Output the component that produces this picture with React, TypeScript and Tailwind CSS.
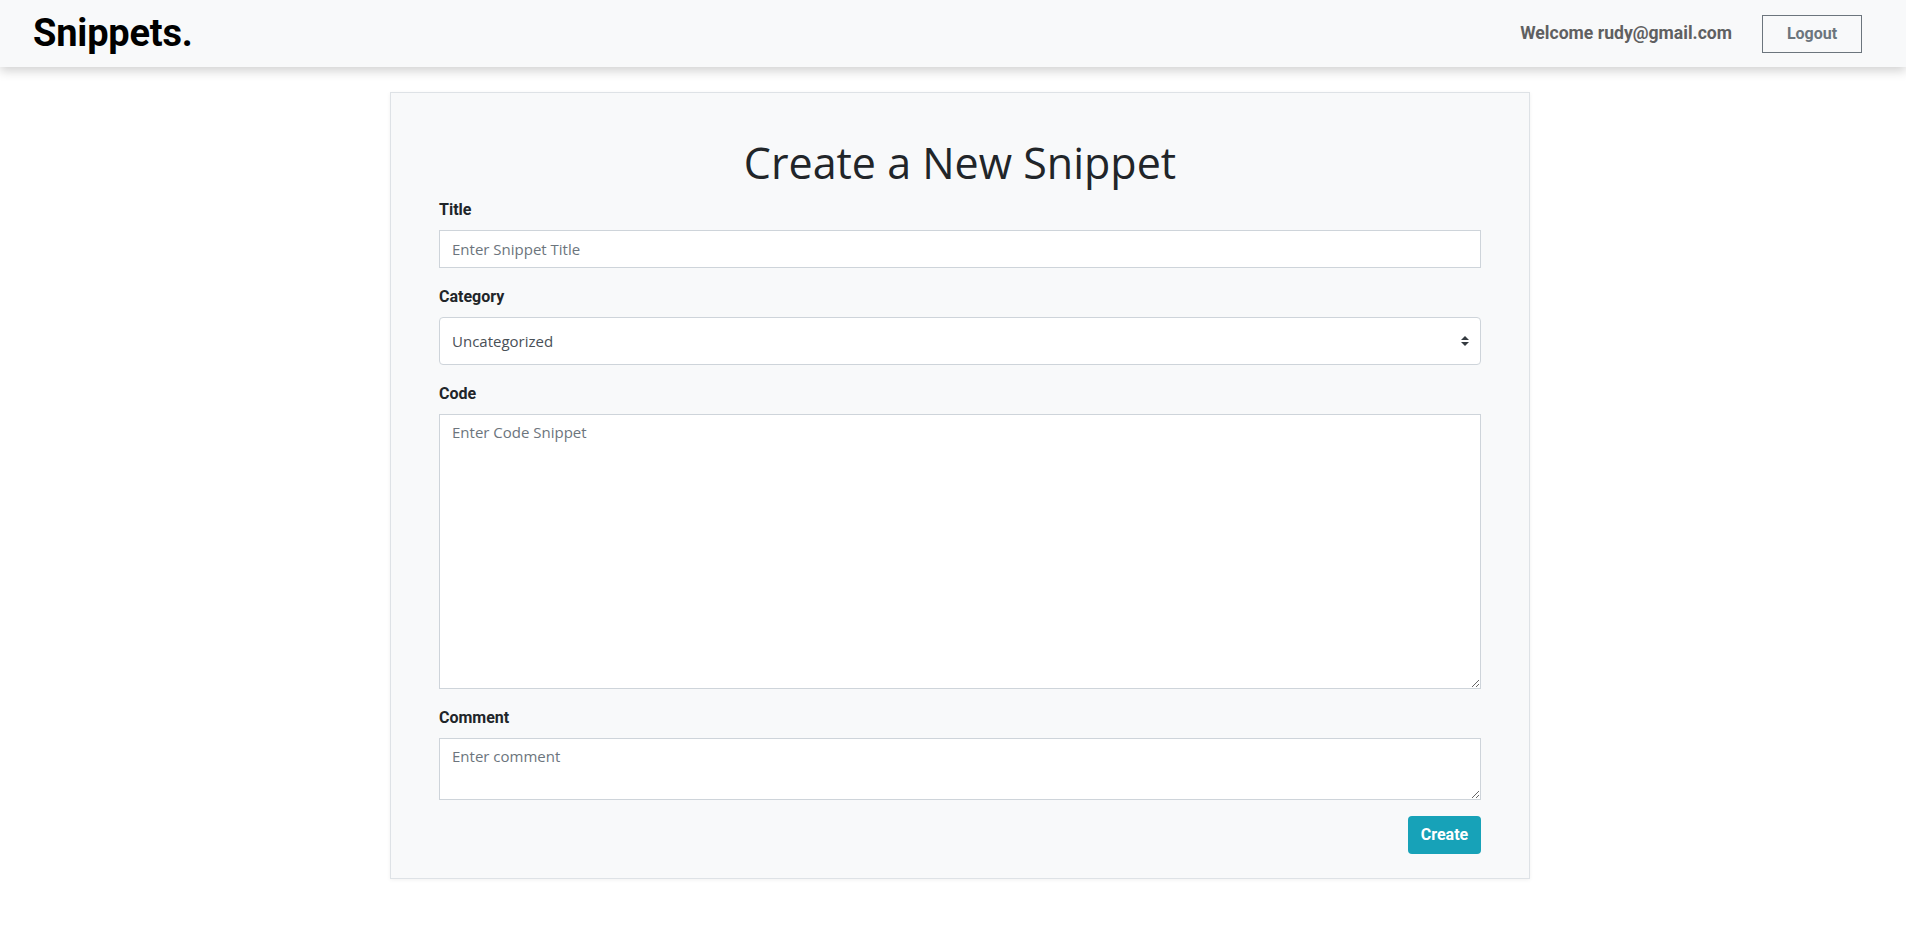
import React from 'react'

const Header: React.FC = () => (
  <header className="flex h-[67px] items-center justify-between bg-[#f8f9fa] pl-[33px] pr-[44px] shadow-[0_4px_10px_rgba(0,0,0,0.18)]">
    <span className="text-[38px] font-bold tracking-[-0.2px] text-black">Snippets.</span>
    <div className="flex items-center gap-[30px]">
      <span className="text-[17.6px] font-bold text-[#5f6061]">Welcome rudy@gmail.com</span>
      <button className="h-[38px] w-[100px] border border-[#6c757d] text-[16px] font-bold text-[#6c757d]">
        Logout
      </button>
    </div>
  </header>
)

const Label: React.FC<{ children: React.ReactNode }> = ({ children }) => (
  <label className="mb-[8px] block text-[16px] leading-6 font-bold text-[#212529]">{children}</label>
)

const fieldClass =
  "block w-full border border-[#ced4da] bg-white px-[12px] text-[15px] text-[#495057] outline-none placeholder:text-[#6c757d] [font-family:'Open_Sans',sans-serif]"

const App: React.FC = () => {
  return (
    <div className="min-h-screen bg-white [font-family:Roboto,'Liberation_Sans',sans-serif]">
      <Header />
      <main className="flex justify-center pt-[25px] pl-[14px]">
        <div className="w-[1140px] border border-[#dee2e6] bg-[#f8f9fa] px-[48px] pt-[46px] pb-[24px] shadow-[0_1px_4px_rgba(0,0,0,0.06)]">
          <h1 className="mb-[11px] text-center text-[43px] leading-[48px] text-[#212529] [font-family:'Open_Sans',sans-serif]">
            Create a New Snippet
          </h1>
          <div className="mb-[17px]">
            <Label>Title</Label>
            <input className={`${fieldClass} h-[38px]`} placeholder="Enter Snippet Title" />
          </div>
          <div className="mb-[17px]">
            <Label>Category</Label>
            <div className="relative">
              <select className={`${fieldClass} h-[48px] appearance-none rounded-[4px]`} defaultValue="Uncategorized">
                <option>Uncategorized</option>
              </select>
              <svg
                className="pointer-events-none absolute top-1/2 right-[12px] -translate-y-1/2"
                width="8"
                height="10"
                viewBox="0 0 8 10"
              >
                <path d="M4 0L8 4H0Z" fill="#343a40" />
                <path d="M4 10L0 6H8Z" fill="#343a40" />
              </svg>
            </div>
          </div>
          <div className="mb-[17px]">
            <Label>Code</Label>
            <textarea className={`${fieldClass} h-[275px] py-[6px]`} placeholder="Enter Code Snippet" />
          </div>
          <div className="mb-[16px]">
            <Label>Comment</Label>
            <textarea className={`${fieldClass} h-[62px] py-[6px]`} placeholder="Enter comment" />
          </div>
          <div className="flex justify-end">
            <button className="h-[38px] w-[73px] rounded-[4px] bg-[#17a2b8] text-[16px] font-bold text-white">
              Create
            </button>
          </div>
        </div>
      </main>
    </div>
  )
}

export default App
